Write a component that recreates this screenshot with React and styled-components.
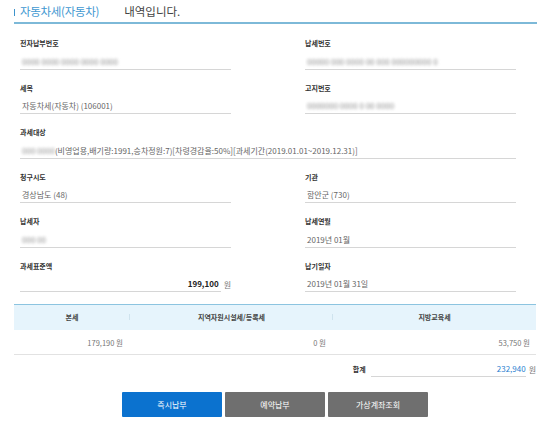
import React from 'react'
import styled, { createGlobalStyle } from 'styled-components'

const GlobalStyle = createGlobalStyle`
  html, body { margin: 0; padding: 0; background: #fff; }
  body { font-family: "Noto Sans CJK KR", "Noto Sans", sans-serif; color: #333; }
`

const StyledPage = styled.div`
  width: 550px;
  height: 424px;
  padding: 0 14px;
  box-sizing: border-box;
  overflow: hidden;
`
const StyledHeader = styled.div`
  height: 22px;
  display: flex;
  align-items: center;
  border-bottom: 2px solid #7db9d8;
  font-size: 11.5px;
  margin-right: -1px;
`
const StyledBar = styled.span`
  width: 1px;
  height: 7px;
  background: #3d93cc;
  margin: 3px 5px 0 0;
`
const StyledHeadBlue = styled.span`
  color: #3f98d1;
  letter-spacing: -0.3px;
`
const StyledHeadDark = styled.span`
  color: #444;
  margin-left: 25px;
`
const StyledForm = styled.div`
  display: grid;
  grid-template-columns: 211px 211px;
  column-gap: 74px;
  row-gap: 13px;
  padding: 14px 0 0 6px;
`
const StyledField = styled.div`
  grid-column: ${p => (p.$wide ? '1 / -1' : 'auto')};
  display: flex;
  flex-direction: column;
`
const StyledLabel = styled.div`
  font-size: 7px;
  font-weight: 700;
  line-height: 10.5px;
  color: #333;
  margin-bottom: 5px;
`
const StyledValueRow = styled.div`
  display: flex;
  align-items: center;
`
const StyledValue = styled.div`
  width: ${p => (p.$wide ? '496px' : '211px')};
  height: 16px;
  line-height: 16px;
  font-size: 8px;
  color: #666;
  padding-left: ${p => (p.$right ? '0' : '2px')};
  text-align: ${p => (p.$right ? 'right' : 'left')};
  font-weight: ${p => (p.$right ? 700 : 400)};
  box-sizing: border-box;
  border-bottom: 1px solid #d6d6d6;
  white-space: nowrap;
  overflow: hidden;
  ${p => p.$right && 'color: #222; padding-right: 2px;'}
`
const StyledBlur = styled.span`
  filter: blur(1.4px);
  color: #8c8c8c;
`
const StyledUnit = styled.span`
  font-size: 8px;
  color: #777;
  margin-left: 3px;
`
const StyledTable = styled.div`
  margin-top: 12px;
  border-top: 1px solid #8cc4e0;
`
const StyledTableRow = styled.div`
  display: grid;
  grid-template-columns: 116px 203px 203px;
  height: 24px;
  align-items: center;
  background: ${p => (p.$head ? '#e6f4fc' : '#fff')};
  border-bottom: 1px solid ${p => (p.$head ? '#e6f4fc' : '#e2e2e2')};
`
const StyledTh = styled.div`
  font-size: 7px;
  font-weight: 700;
  color: #444;
  text-align: center;
  position: relative;
  ${p => p.$divider && `
    &::after {
      content: '';
      position: absolute;
      right: 0;
      top: 2px;
      width: 1px;
      height: 6px;
      background: #cfe3ee;
    }
  `}
`
const StyledTd = styled.div`
  font-size: 7.5px;
  color: #777;
  text-align: right;
  padding-right: ${p => p.$pad}px;
`
const StyledTotal = styled.div`
  display: flex;
  align-items: center;
  justify-content: flex-end;
  margin-top: 6px;
`
const StyledTotalLabel = styled.span`
  font-size: 7px;
  font-weight: 700;
  color: #333;
  margin-right: 5px;
`
const StyledTotalValue = styled.div`
  width: 155px;
  height: 15px;
  line-height: 15px;
  text-align: right;
  font-size: 8px;
  color: #2c7fd0;
  border-bottom: 1px solid #d6d6d6;
`
const StyledButtons = styled.div`
  display: flex;
  justify-content: center;
  gap: 3px;
  margin-top: 15px;
`
const StyledButton = styled.button`
  width: 100px;
  height: 25px;
  border: none;
  border-radius: 1px;
  background: ${p => (p.$primary ? '#0b72cf' : '#6f6f6f')};
  color: #fff;
  font-family: "Noto Sans CJK KR", sans-serif;
  font-size: 8px;
  padding: 0;
`

const fields = [
  { label: '전자납부번호', value: '0000 0000 0000 0000 0000', blur: true },
  { label: '납세번호', value: '00000 000 0000 00 000 000000000 0', blur: true },
  { label: '세목', value: '자동차세(자동차) (106001)' },
  { label: '고지번호', value: '0000000 0000 0 00 0000', blur: true },
]

const App = () => (
  <StyledPage>
    <GlobalStyle />
    <StyledHeader>
      <StyledBar />
      <StyledHeadBlue>자동차세(자동차)</StyledHeadBlue>
      <StyledHeadDark>내역입니다.</StyledHeadDark>
    </StyledHeader>
    <StyledForm>
      {fields.map(f => (
        <StyledField key={f.label}>
          <StyledLabel>{f.label}</StyledLabel>
          <StyledValue>{f.blur ? <StyledBlur>{f.value}</StyledBlur> : f.value}</StyledValue>
        </StyledField>
      ))}
      <StyledField $wide>
        <StyledLabel>과세대상</StyledLabel>
        <StyledValue $wide>
          <StyledBlur>000 0000</StyledBlur>
          (비영업용,배기량:1991,승차정원:7)[차령경감율:50%][과세기간(2019.01.01~2019.12.31)]
        </StyledValue>
      </StyledField>
      <StyledField>
        <StyledLabel>청구시도</StyledLabel>
        <StyledValue>경상남도 (48)</StyledValue>
      </StyledField>
      <StyledField>
        <StyledLabel>기관</StyledLabel>
        <StyledValue>함안군 (730)</StyledValue>
      </StyledField>
      <StyledField>
        <StyledLabel>납세자</StyledLabel>
        <StyledValue><StyledBlur>000 00</StyledBlur></StyledValue>
      </StyledField>
      <StyledField>
        <StyledLabel>납세연월</StyledLabel>
        <StyledValue>2019년 01월</StyledValue>
      </StyledField>
      <StyledField>
        <StyledLabel>과세표준액</StyledLabel>
        <StyledValueRow>
          <StyledValue $right>199,100</StyledValue>
          <StyledUnit>원</StyledUnit>
        </StyledValueRow>
      </StyledField>
      <StyledField>
        <StyledLabel>납기일자</StyledLabel>
        <StyledValue>2019년 01월 31일</StyledValue>
      </StyledField>
    </StyledForm>
    <StyledTable>
      <StyledTableRow $head>
        <StyledTh $divider>본세</StyledTh>
        <StyledTh $divider>지역자원시설세/등록세</StyledTh>
        <StyledTh>지방교육세</StyledTh>
      </StyledTableRow>
      <StyledTableRow>
        <StyledTd $pad={7}>179,190 원</StyledTd>
        <StyledTd $pad={7}>0 원</StyledTd>
        <StyledTd $pad={6}>53,750 원</StyledTd>
      </StyledTableRow>
    </StyledTable>
    <StyledTotal>
      <StyledTotalLabel>합계</StyledTotalLabel>
      <StyledTotalValue>232,940</StyledTotalValue>
      <StyledUnit>원</StyledUnit>
    </StyledTotal>
    <StyledButtons>
      <StyledButton $primary>즉시납부</StyledButton>
      <StyledButton>예약납부</StyledButton>
      <StyledButton>가상계좌조회</StyledButton>
    </StyledButtons>
  </StyledPage>
)

export default App
